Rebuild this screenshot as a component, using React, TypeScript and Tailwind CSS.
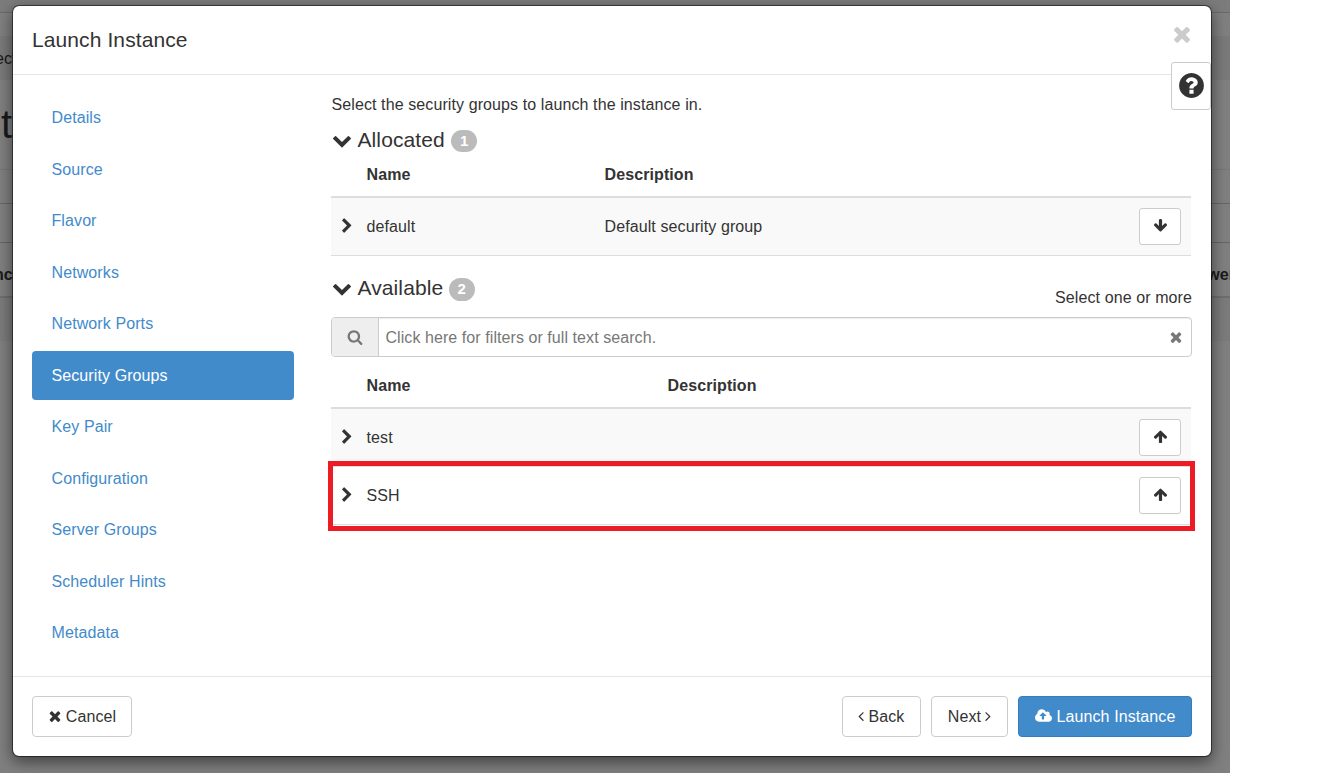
import type { ReactNode } from "react";

const PATHS = {
  times:
    "M1490 1322q0 40-28 68l-136 136q-28 28-68 28t-68-28l-294-294-294 294q-28 28-68 28t-68-28l-136-136q-28-28-28-68t28-68l294-294-294-294q-28-28-28-68t28-68l136-136q28-28 68-28t68 28l294 294 294-294q28-28 68-28t68 28l136 136q28 28 28 68t-28 68l-294 294 294 294q28 28 28 68z",
  question:
    "M1024 1376v-192q0-14-9-23t-23-9h-192q-14 0-23 9t-9 23v192q0 14 9 23t23 9h192q14 0 23-9t9-23zm256-672q0-88-55.5-163t-138.5-116-170-41q-243 0-371 213-15 24 8 42l132 100q7 6 19 6 16 0 25-12 53-68 86-92 34-24 86-24 48 0 85.5 26t37.5 59q0 38-20 61t-68 45q-63 28-115.5 86.5t-52.5 125.5v36q0 14 9 23t23 9h192q14 0 23-9t9-23q0-19 21.5-49.5t54.5-49.5q32-18 49-28.5t46-35 44.5-48 28-60.5 12.5-81zm384 192q0 209-103 385.5t-279.5 279.5-385.5 103-385.5-103-279.5-279.5-103-385.5 103-385.5 279.5-279.5 385.5-103 385.5 103 279.5 279.5 103 385.5z",
  chevronRight:
    "M1363 877l-742 742q-19 19-45 19t-45-19l-166-166q-19-19-19-45t19-45l531-531-531-531q-19-19-19-45t19-45l166-166q19-19 45-19t45 19l742 742q19 19 19 45t-19 45z",
  chevronDown:
    "M1683 808l-742 741q-19 19-45 19t-45-19l-742-741q-19-19-19-45.5t19-45.5l166-165q19-19 45-19t45 19l531 531 531-531q19-19 45-19t45 19l166 165q19 19 19 45.5t-19 45.5z",
  arrowDown:
    "M1675 832q0 53-37 90l-651 652q-39 37-91 37-53 0-90-37l-651-652q-38-36-38-90 0-53 38-91l74-75q39-37 91-37 53 0 90 37l294 294v-704q0-52 38-90t90-38h128q52 0 90 38t38 90v704l294-294q37-37 90-37 52 0 91 37l75 75q37 39 37 91z",
  arrowUp:
    "M1675 971q0 51-37 90l-75 75q-38 38-91 38-54 0-90-38l-294-293v704q0 52-37.5 84.5t-90.5 32.5h-128q-53 0-90.5-32.5t-37.5-84.5v-704l-294 293q-36 38-90 38t-90-38l-75-75q-38-38-38-90 0-53 38-91l651-651q35-37 90-37 54 0 91 37l651 651q37 39 37 91z",
  search:
    "M1216 832q0-185-131.5-316.5t-316.5-131.5-316.5 131.5-131.5 316.5 131.5 316.5 316.5 131.5 316.5-131.5 131.5-316.5zm512 832q0 52-38 90t-90 38q-54 0-90-38l-343-342q-179 124-399 124-143 0-273.5-55.5t-225-150-150-225-55.5-273.5 55.5-273.5 150-225 225-150 273.5-55.5 273.5 55.5 225 150 150 225 55.5 273.5q0 220-124 399l343 343q37 37 37 90z",
  angleLeft:
    "M1203 544q0 13-10 23l-393 393 393 393q10 10 10 23t-10 23l-50 50q-10 10-23 10t-23-10l-466-466q-10-10-10-23t10-23l466-466q10-10 23-10t23 10l50 50q10 10 10 23z",
  angleRight:
    "M1171 960q0 13-10 23l-466 466q-10 10-23 10t-23-10l-50-50q-10-10-10-23t10-23l393-393-393-393q-10-10-10-23t10-23l50-50q10-10 23-10t23 10l466 466q10 10 10 23z",
  cloudUpload:
    "M1216 864q0-14-9-23l-352-352q-9-9-23-9t-23 9l-351 351q-10 12-10 24 0 14 9 23t23 9h224v352q0 13 9.5 22.5t22.5 9.5h192q13 0 22.5-9.5t9.5-22.5v-352h224q13 0 22.5-9.5t9.5-22.5zm640 288q0 159-112.5 271.5t-271.5 112.5h-1088q-185 0-316.5-131.5t-131.5-316.5q0-130 70-240t188-165q-2-30-2-43 0-212 150-362t362-150q156 0 285.5 87t188.5 231q71-62 166-62 106 0 181 75t75 181q0 76-41 138 130 31 213.5 135.5t83.5 238.5z",
};

function Icon({ name, className, box = "0 0 1792 1792" }: { name: keyof typeof PATHS; className: string; box?: string }) {
  return (
    <svg viewBox={box} fill="currentColor" className={`block shrink-0 ${className}`} aria-hidden="true">
      <path d={PATHS[name]} />
    </svg>
  );
}

const STEPS = [
  "Details",
  "Source",
  "Flavor",
  "Networks",
  "Network Ports",
  "Security Groups",
  "Key Pair",
  "Configuration",
  "Server Groups",
  "Scheduler Hints",
  "Metadata",
];

function SectionTitle({ title, count, badge }: { title: string; count: number; badge: string }) {
  return (
    <div className="flex h-6 items-center">
      <Icon name="chevronDown" className="-mt-px ml-px size-5" />
      <h3 className="ml-[5.5px] text-[21px] leading-6">{title}</h3>
      <span className={`mt-[2px] flex w-[26px] items-center justify-center rounded-full bg-[#bbb] text-[15px] font-bold text-white ${badge}`}>
        {count}
      </span>
    </div>
  );
}

function TableHead({ nameCol }: { nameCol: string }) {
  return (
    <div className="flex h-[34px] w-[860px] border-b-2 border-[#ddd] pl-[35.5px] leading-[22px] font-bold">
      <span className={nameCol}>Name</span>
      <span>Description</span>
    </div>
  );
}

function Row({ name, description, nameCol, striped, icon }: { name: string; description?: string; nameCol: string; striped?: boolean; icon: "arrowUp" | "arrowDown" }) {
  return (
    <div className={`flex h-[58px] w-[860px] items-center border-b border-[#ddd] pr-[10px] pl-2 ${striped ? "bg-[#f9f9f9]" : ""}`}>
      <Icon name="chevronRight" className="-mt-px mr-[11.5px] size-4" />
      <span className={nameCol}>{name}</span>
      <span>{description}</span>
      <button className="ml-auto flex h-[37px] w-[42px] items-center justify-center rounded-[3px] border border-[#ccc] bg-white">
        <Icon name={icon} className="-mt-[2px] size-[15px]" />
      </button>
    </div>
  );
}

function FooterButton({ children, className }: { children: ReactNode; className: string }) {
  return <button className={`flex h-[41px] items-center justify-center rounded-[4px] border tracking-[0.1px] ${className}`}>{children}</button>;
}

function Backdrop() {
  return (
    <div className="flex h-full flex-col bg-[#808080] text-[#1a1a1a]">
      <div className="h-[13px] shrink-0 border-b border-[#6a6a6a] bg-[#7c7c7c]" />
      <div className="h-[23px] shrink-0" />
      <div className="h-11 shrink-0 bg-[#7a7a7a] leading-[46px]">
        <span className="-ml-[5px]">ect</span>
      </div>
      <div className="h-[90px] shrink-0 border-b border-[#777] pl-px text-[40px] leading-[89px]">t</div>
      <div className="h-[34px] shrink-0 border-b border-[#666]" />
      <div className="h-[39px] shrink-0 border-b border-[#666]" />
      <div className="flex h-[55px] shrink-0 justify-between border-b-2 border-[#6f6f6f] leading-[63px] font-bold">
        <span className="-ml-1.5">nc</span>
        <span className="-mr-[5px]">wer</span>
      </div>
      <div className="h-[43px] shrink-0 bg-[#7c7c7c]" />
    </div>
  );
}

export default function App() {
  return (
    <div className="relative h-[773px] w-[1330px] overflow-hidden bg-white font-['Liberation_Sans',Arial,sans-serif] text-base tracking-[0.1px] text-[#333]">
      <div className="h-full w-[1230px] overflow-hidden">
        <Backdrop />
      </div>
      <div className="absolute inset-y-0 left-0 w-[1230px] overflow-hidden">
        <section className="relative mt-[5px] ml-3 flex h-[752px] w-[1200px] flex-col rounded-[7px] border border-black/50 bg-white bg-clip-padding shadow-[0_5px_15px_rgba(0,0,0,0.5)]">
          <header className="flex h-[69px] shrink-0 items-start justify-between border-b border-[#e5e5e5] pr-[17px] pl-[19px]">
            <h1 className="mt-[22px] text-[21px] leading-6">Launch Instance</h1>
            <Icon name="times" className="mt-[16px] size-6 text-[#ccc]" />
          </header>
          <button className="absolute top-[56px] right-0 flex h-12 w-10 items-center justify-center rounded-[3px] border border-[#ccc] bg-white">
            <Icon name="question" className="-mt-px size-[29px]" />
          </button>

          <div className="flex h-[601px] shrink-0">
            <nav className="mt-[18.5px] ml-[19px] flex w-[262px] flex-col gap-[2.5px]">
              {STEPS.map((step) => (
                <a
                  key={step}
                  className={`flex h-[49px] shrink-0 items-center rounded-[4px] pl-[19.5px] ${
                    step === "Security Groups" ? "bg-[#428bca] text-white" : "text-[#428bca]"
                  }`}
                >
                  {step}
                </a>
              ))}
            </nav>

            <main className="mt-[18px] ml-[37px] w-[861px]">
              <p className="h-[35px] pl-[0.5px] leading-6">Select the security groups to launch the instance in.</p>
              <SectionTitle title="Allocated" count={1} badge="ml-[6.5px] h-[22px]" />
              <div className="mt-3">
                <TableHead nameCol="w-[238px]" />
                <Row name="default" description="Default security group" nameCol="w-[238px]" striped icon="arrowDown" />
              </div>

              <div className="mt-5 flex h-[41px] justify-between">
                <SectionTitle title="Available" count={2} badge="ml-[5.5px] h-[23px]" />
                <span className="mt-[10px] leading-6">Select one or more</span>
              </div>
              <div className="flex h-10 items-center overflow-hidden rounded-[4px] border border-[#ccc] text-[#777] shadow-[inset_0_1px_1px_rgba(0,0,0,0.075)]">
                <span className="flex h-full w-[47px] items-center justify-center border-r border-[#ccc] bg-[#eee]">
                  <Icon name="search" className="size-4" />
                </span>
                <span className="mt-px ml-[6.5px] tracking-[0.07px]">Click here for filters or full text search.</span>
                <Icon name="times" className="mr-[7px] ml-auto size-4" />
              </div>

              <div className="relative mt-[18px]">
                <TableHead nameCol="w-[301px]" />
                <Row name="test" nameCol="w-[301px]" striped icon="arrowUp" />
                <Row name="SSH" nameCol="w-[301px]" icon="arrowUp" />
                <div className="absolute top-[86px] -left-[3px] h-[70px] w-[867px] border-[5px] border-[#ed1c24]" />
              </div>
            </main>
          </div>

          <footer className="flex h-20 shrink-0 items-center gap-[10px] border-t border-[#e5e5e5] px-[19px]">
            <FooterButton className="mr-auto w-[100px] border-[#ccc]">
              <Icon name="times" className="-mt-px mr-[3px] -ml-px size-4" />
              Cancel
            </FooterButton>
            <FooterButton className="w-[79px] border-[#ccc]">
              <Icon name="angleLeft" box="576 0 640 1792" className="-mt-px mr-[5px] -ml-px h-4 w-[6px]" />
              Back
            </FooterButton>
            <FooterButton className="w-[77px] border-[#ccc]">
              Next
              <Icon name="angleRight" box="576 0 640 1792" className="-mt-px ml-1 h-4 w-[6px]" />
            </FooterButton>
            <FooterButton className="w-[174px] border-[#357ebd] bg-[#428bca] text-white">
              <Icon name="cloudUpload" box="-64 0 1920 1792" className="-mt-px mr-[5px] h-4 w-[17px]" />
              Launch Instance
            </FooterButton>
          </footer>
        </section>
      </div>
    </div>
  );
}
